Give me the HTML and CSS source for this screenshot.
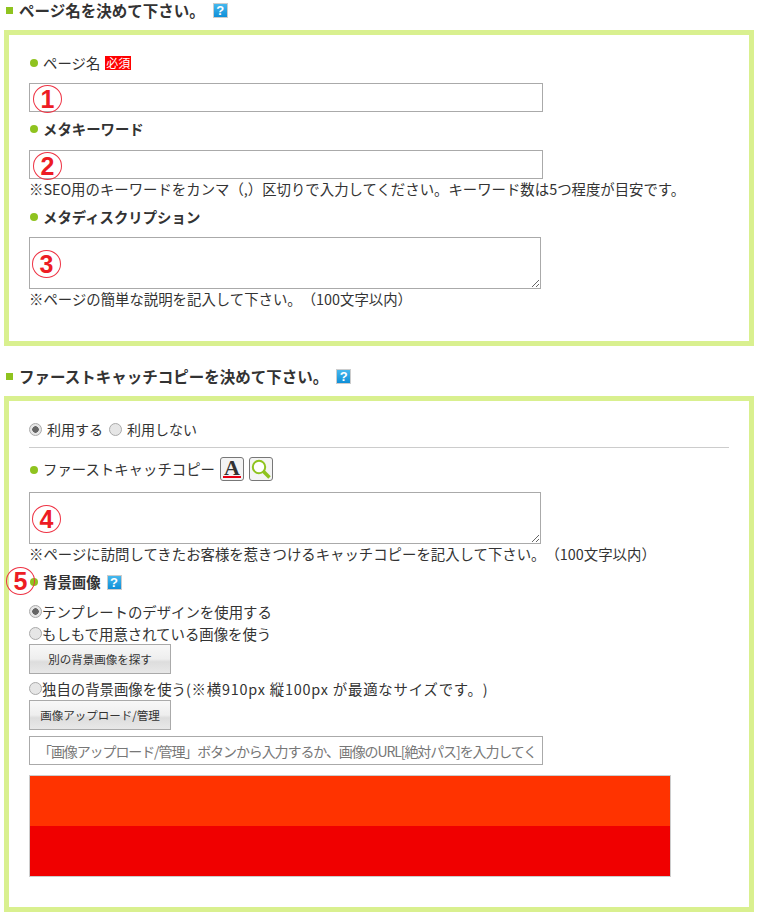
FILE: index.html
```html
<!DOCTYPE html>
<html lang="ja">
<head>
    <meta charset="UTF-8">
    <title>ページ設定</title>
    <link rel="stylesheet" href="styles.css">
</head>
<body>

<h2 class="heading">ページ名を決めて下さい。<span class="help">?</span></h2>
<div class="box box-page">
    <div class="label label-first">ページ名 <span class="required">必須</span></div>
    <div class="field">
        <input type="text" class="input">
        <span class="num">1</span>
    </div>
    <div class="label label-bold label-keyword">メタキーワード</div>
    <div class="field">
        <input type="text" class="input">
        <span class="num">2</span>
    </div>
    <p class="note">※SEO用のキーワードをカンマ（,）区切りで入力してください。キーワード数は5つ程度が目安です。</p>
    <div class="label label-bold label-desc">メタディスクリプション</div>
    <div class="field">
        <textarea class="area"></textarea>
        <span class="num num-area">3</span>
    </div>
    <p class="note">※ページの簡単な説明を記入して下さい。（100文字以内）</p>
</div>

<h2 class="heading heading-second">ファーストキャッチコピーを決めて下さい。<span class="help">?</span></h2>
<div class="box box-copy">
    <div class="use-row">
        <span class="radio checked"></span><span class="use-text">利用する</span>
        <span class="radio"></span><span class="use-text">利用しない</span>
    </div>
    <div class="label label-copy">
        ファーストキャッチコピー
        <span class="tool tool-a">A</span>
        <span class="tool tool-search">
            <svg width="20" height="20" viewBox="0 0 20 20" fill="#fff" stroke="#8fc31f">
                <circle cx="8" cy="8" r="6.2" stroke-width="2"/>
                <path d="M12.5 12.5l6 6" stroke-width="3.5"/>
            </svg>
        </span>
    </div>
    <div class="field">
        <textarea class="area"></textarea>
        <span class="num num-area">4</span>
    </div>
    <p class="note">※ページに訪問してきたお客様を惹きつけるキャッチコピーを記入して下さい。（100文字以内）</p>
    <div class="label label-bold label-bg">
        背景画像<span class="help help-small">?</span>
        <span class="num num-bg">5</span>
    </div>
    <div class="option"><span class="radio checked"></span>テンプレートのデザインを使用する</div>
    <div class="option"><span class="radio"></span>もしもで用意されている画像を使う</div>
    <button class="btn">別の背景画像を探す</button>
    <div class="option option-own"><span class="radio"></span>独自の背景画像を使う<span class="size-hint">(※横910px 縦100px が最適なサイズです。)</span></div>
    <button class="btn">画像アップロード/管理</button>
    <input type="text" class="input input-url" placeholder="「画像アップロード/管理」ボタンから入力するか、画像のURL[絶対パス]を入力してください。">
    <div class="preview">
        <div class="preview-top"></div>
        <div class="preview-bottom"></div>
    </div>
</div>

</body>
</html>
```

FILE: styles.css
```css
* {
    box-sizing: border-box;
}

body {
    margin: 0;
    padding: 0 9px 0 4px;
    background-color: #fff;
    font-family: "Noto Sans CJK JP", "Noto Sans", sans-serif;
    font-size: 14.4px;
    color: #333;
    text-spacing-trim: space-all;
}

.heading {
    display: flex;
    align-items: center;
    height: 30px;
    margin: 0;
    padding: 0 0 10px 2px;
    font-size: 15.5px;
    font-weight: bold;
    line-height: 20px;
}

.heading::before {
    content: "";
    width: 7px;
    height: 7px;
    margin-right: 6px;
    background-color: #8fc31f;
}

.heading-second {
    margin-top: 20px;
}

.help {
    display: inline-block;
    width: 15px;
    height: 15px;
    margin-left: 8px;
    border: 1px solid #ccc;
    background: linear-gradient(#45b8ee, #0f8fd8);
    color: #fff;
    font-family: "Liberation Sans", sans-serif;
    font-size: 13px;
    font-weight: bold;
    line-height: 13px;
    text-align: center;
}

.help-small {
    margin-left: 6px;
}

.box {
    border: 5px solid #d9f08f;
    padding: 0 20px;
}

.box-page {
    height: 316px;
    padding-top: 18px;
}

.box-copy {
    height: 516px;
    padding-top: 18px;
}

.label {
    position: relative;
    display: flex;
    align-items: center;
    height: 20px;
    padding-left: 14px;
    line-height: 20px;
}

.label::before {
    content: "";
    position: absolute;
    left: 1px;
    top: 6px;
    width: 8px;
    height: 8px;
    border-radius: 50%;
    background-color: #8fc31f;
}

.label-bold {
    font-weight: bold;
}

.label-first {
    margin-bottom: 10px;
}

.label-keyword {
    margin-top: 7px;
    margin-bottom: 11px;
}

.label-desc {
    margin-top: 9px;
    margin-bottom: 10px;
}

.required {
    display: inline-block;
    height: 14px;
    margin-left: 5px;
    padding: 0 1px;
    background-color: #f00;
    color: #fff;
    font-size: 12px;
    line-height: 14px;
}

.field {
    position: relative;
}

.input {
    display: block;
    width: 514px;
    height: 29px;
    margin: 0;
    padding: 2px 8px;
    border: 1px solid #aaa;
    border-radius: 0;
    font-family: inherit;
    font-size: 14px;
}

.input-url {
    margin-top: 6px;
    letter-spacing: -1.1px;
}

.input-url::placeholder {
    color: #777;
}

.area {
    display: block;
    width: 512px;
    height: 52px;
    margin: 0;
    padding: 4px;
    border: 1px solid #aaa;
    border-radius: 0;
}

.note {
    margin: 0 0 1px;
    line-height: 19px;
}

.num {
    position: absolute;
    left: 4px;
    top: 2px;
    width: 29px;
    height: 28px;
    border: 1px solid #ee3344;
    border-radius: 50%;
    color: #ed1c24;
    font-family: "Liberation Sans", sans-serif;
    font-size: 25px;
    font-weight: bold;
    line-height: 26px;
    text-align: center;
}

.num-area {
    left: 3px;
    top: 13px;
}

.num-bg {
    left: -23px;
    top: -5px;
}

.use-row {
    display: flex;
    align-items: center;
    height: 20px;
    font-size: 14px;
}

.use-text {
    margin: 0 6px 0 5px;
}

.radio {
    display: inline-block;
    flex-shrink: 0;
    width: 13px;
    height: 13px;
    border: 1px solid #aaa;
    border-radius: 50%;
    background-color: #e6e6e6;
}

.radio.checked {
    background: radial-gradient(circle, #666 0 3px, #e6e6e6 3.5px);
}

.label-copy {
    box-sizing: content-box;
    height: 33px;
    margin-top: 8px;
    margin-bottom: 7px;
    padding-top: 4px;
    border-top: 1px solid #ccc;
}

.label-copy::before {
    top: 18px;
}

.tool {
    display: inline-flex;
    align-items: center;
    justify-content: center;
    width: 24px;
    height: 24px;
    margin-left: 5px;
    border: 1px solid #777;
    border-radius: 3px;
    background-color: #f4f4f4;
}

.tool-a {
    align-items: flex-start;
    background: linear-gradient(#e60012, #e60012) center 18px / 18px 2px no-repeat, #f4f4f4;
    font-family: "Liberation Serif", serif;
    font-size: 22px;
    font-weight: bold;
    line-height: 20px;
}

.label-bg {
    margin-top: 9px;
    margin-bottom: 8px;
}

.option {
    display: flex;
    align-items: center;
    height: 22px;
}

.size-hint {
    letter-spacing: 0.8px;
}

.btn {
    display: block;
    width: 142px;
    height: 30px;
    margin: 0;
    padding: 0;
    border: 1px solid #aaa;
    background: linear-gradient(#f8f8f8, #eee 50%, #ddd 60%, #e8e8e8);
    color: #333;
    font-family: inherit;
    font-size: 11.5px;
}

.option-own {
    margin-top: 3px;
}

.option-own + .btn {
    margin-top: 1px;
}

.preview {
    width: 642px;
    height: 102px;
    margin-top: 10px;
    border: 1px solid #ccc;
}

.preview-top {
    height: 50px;
    background-color: #f30;
}

.preview-bottom {
    height: 50px;
    background-color: #f00000;
}
```
